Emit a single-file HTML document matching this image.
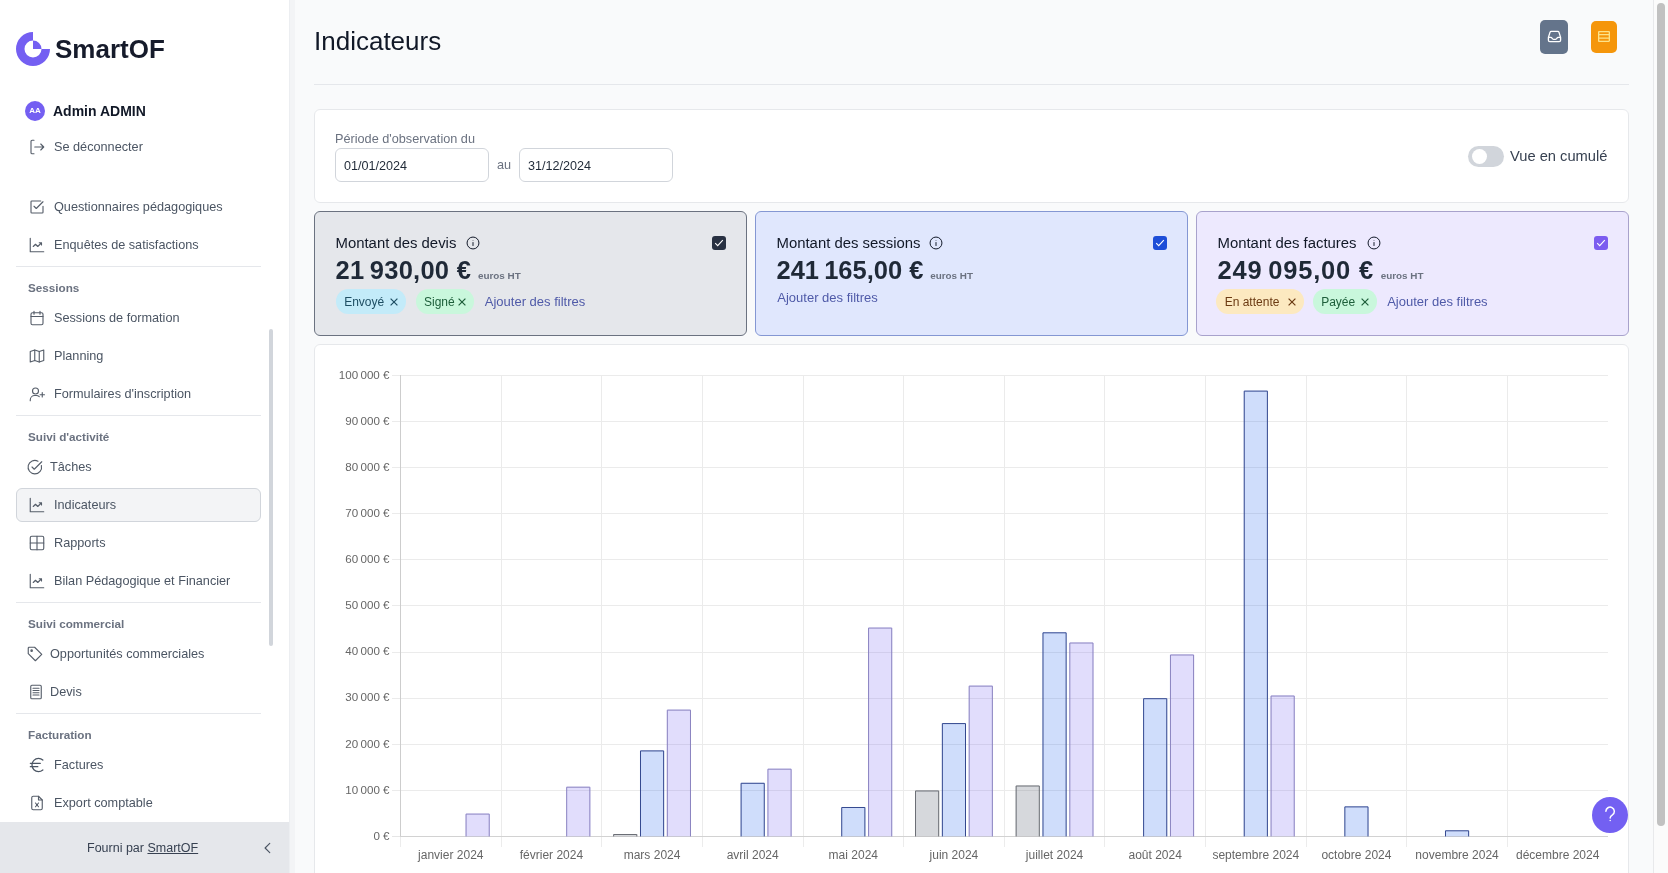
<!DOCTYPE html>
<html lang="fr">
<head>
<meta charset="utf-8">
<title>Indicateurs - SmartOF</title>
<style>
*{box-sizing:border-box;margin:0;padding:0}
html,body{width:1668px;height:873px;overflow:hidden}
body{position:relative;will-change:transform;background:#f9fafb;font-family:"Liberation Sans",sans-serif;color:#111827}
.abs{position:absolute;white-space:nowrap}
#sb{position:absolute;left:0;top:0;width:289px;height:873px;background:#fff}
.it{position:absolute;left:30px;height:20px;line-height:20px;font-size:12.7px;color:#4b5563;white-space:nowrap}
.it svg{position:absolute;left:-2px;top:1px;width:18px;height:18px}
.it span{position:absolute;left:24px;top:0}
.hd{position:absolute;left:28px;height:20px;line-height:20px;font-size:11.7px;font-weight:bold;color:#6b7280;white-space:nowrap}
.dv{position:absolute;left:16px;width:245px;height:1px;background:#e5e7eb}
.card{position:absolute;top:211px;width:433px;height:125px;border:1px solid;border-radius:6px}
.ct{position:absolute;left:20.5px;top:21px;height:20px;line-height:20px;font-size:14.9px;color:#111827;white-space:nowrap}
.cv{position:absolute;left:20.5px;top:43.4px;height:30px;line-height:30px;font-size:25.5px;font-weight:bold;color:#1f2937;white-space:nowrap}
.cv small{font-size:9.9px;letter-spacing:0;color:#6b7280;font-weight:bold;margin-left:6.8px}
.badge{position:absolute;top:77.4px;height:24.4px;line-height:27px;border-radius:12.2px;font-size:12px;padding:0 0 0 8.5px;white-space:nowrap}
.add{position:absolute;top:77.4px;height:24.4px;line-height:26px;font-size:13px;color:#4f5aa8;white-space:nowrap}
.cb{position:absolute;top:24px;left:397px;width:14px;height:14px;border-radius:3px}
</style>
</head>
<body>
<!-- SIDEBAR -->
<div id="sb">
  <svg class="abs" style="left:0;top:0" width="60" height="80" viewBox="0 0 60 80">
    <path fill="#745ff2" d="M50 49A17 17 0 1 1 33 32L33 40.5A8.5 8.5 0 1 0 41.5 49Z"/>
    <path fill="#745ff2" d="M33 49L33 40.5A8.5 8.5 0 0 1 41.5 49Z"/>
  </svg>
  <div class="abs" style="left:55px;top:34px;height:30px;line-height:30px;font-size:26px;font-weight:bold;color:#161b2b;">SmartOF</div>

  <div class="abs" style="left:25px;top:101px;width:20px;height:20px;border-radius:50%;background:#745ff2;color:#fff;font-size:8px;font-weight:bold;line-height:20px;text-align:center">AA</div>
  <div class="abs" style="left:53px;top:101px;height:20px;line-height:20px;font-size:14px;font-weight:bold;color:#111827">Admin ADMIN</div>

  <div class="it" style="top:137px"><svg viewBox="0 0 24 24" fill="none" stroke="#555d69" stroke-width="1.5" stroke-linecap="round" stroke-linejoin="round"><path d="M8 3H5.5A1.5 1.5 0 0 0 4 4.5v15A1.5 1.5 0 0 0 5.5 21H8"/><path d="M9 12h12M17 8l4 4-4 4"/></svg><span>Se déconnecter</span></div>

  <div class="it" style="top:197px"><svg viewBox="0 0 24 24" fill="none" stroke="#555d69" stroke-width="1.5" stroke-linecap="round" stroke-linejoin="round"><path d="M4 5a1 1 0 0 1 1-1h12M20 11v8a1 1 0 0 1-1 1H5a1 1 0 0 1-1-1V5"/><path d="M8 11l3 3 9-9"/></svg><span>Questionnaires pédagogiques</span></div>
  <div class="it" style="top:235px"><svg viewBox="0 0 24 24" fill="none" stroke="#555d69" stroke-width="1.5" stroke-linecap="round" stroke-linejoin="round"><path d="M3 3v18h18"/><path d="M7 14l3-3 3 3 5-5M15 9h3v3"/></svg><span>Enquêtes de satisfactions</span></div>
  <div class="dv" style="top:266px"></div>

  <div class="hd" style="top:277.5px">Sessions</div>
  <div class="it" style="top:307.5px"><svg viewBox="0 0 24 24" fill="none" stroke="#555d69" stroke-width="1.5" stroke-linecap="round" stroke-linejoin="round"><rect x="4" y="5" width="16" height="16" rx="2"/><path d="M4 10h16M8 3v4M16 3v4"/></svg><span>Sessions de formation</span></div>
  <div class="it" style="top:345.5px"><svg viewBox="0 0 24 24" fill="none" stroke="#555d69" stroke-width="1.5" stroke-linecap="round" stroke-linejoin="round"><path d="M3 6l6-2 6 2 6-2v14l-6 2-6-2-6 2z"/><path d="M9 4v14M15 6v14"/></svg><span>Planning</span></div>
  <div class="it" style="top:383.5px"><svg viewBox="0 0 24 24" fill="none" stroke="#555d69" stroke-width="1.5" stroke-linecap="round" stroke-linejoin="round"><circle cx="10" cy="8" r="4"/><path d="M3 21v-1a6 6 0 0 1 6-6h2a6 6 0 0 1 4 1.5"/><path d="M19 10v6M16 13h6"/></svg><span>Formulaires d'inscription</span></div>
  <div class="dv" style="top:415px"></div>

  <div class="hd" style="top:426.5px">Suivi d'activité</div>
  <div class="it" style="top:456.5px;left:28px"><svg viewBox="0 0 24 24" fill="none" stroke="#555d69" stroke-width="1.5" stroke-linecap="round" stroke-linejoin="round"><path d="M20.5 10A9 9 0 1 1 16 4.2"/><path d="M8 12l3 3 10-10"/></svg><span style="left:22px">Tâches</span></div>
  <div class="abs" style="left:16px;top:488px;width:245px;height:34px;background:#f3f4f6;border:1px solid #d1d5db;border-radius:6px"></div>
  <div class="it" style="top:494.5px"><svg viewBox="0 0 24 24" fill="none" stroke="#555d69" stroke-width="1.5" stroke-linecap="round" stroke-linejoin="round"><path d="M3 3v18h18"/><path d="M7 14l3-3 3 3 5-5M15 9h3v3"/></svg><span>Indicateurs</span></div>
  <div class="it" style="top:532.5px"><svg viewBox="0 0 24 24" fill="none" stroke="#555d69" stroke-width="1.5" stroke-linecap="round" stroke-linejoin="round"><rect x="3" y="3" width="18" height="18" rx="2"/><path d="M3 12h18M12 3v18"/></svg><span>Rapports</span></div>
  <div class="it" style="top:570.5px"><svg viewBox="0 0 24 24" fill="none" stroke="#555d69" stroke-width="1.5" stroke-linecap="round" stroke-linejoin="round"><path d="M3 3v18h18"/><path d="M7 14l3-3 3 3 5-5M15 9h3v3"/></svg><span>Bilan Pédagogique et Financier</span></div>
  <div class="dv" style="top:602px"></div>

  <div class="hd" style="top:613.5px">Suivi commercial</div>
  <div class="it" style="top:643.5px;left:28px"><svg viewBox="0 0 24 24" fill="none" stroke="#555d69" stroke-width="1.5" stroke-linecap="round" stroke-linejoin="round"><path d="M3 4v7.5l9.5 9.5 8.5-8.5L11.5 3H4z"/><circle cx="7.5" cy="7.5" r="1"/></svg><span style="left:22px">Opportunités commerciales</span></div>
  <div class="it" style="top:681.5px;left:29px"><svg viewBox="0 0 24 24" fill="none" stroke="#555d69" stroke-width="1.5" stroke-linecap="round" stroke-linejoin="round"><rect x="5" y="3" width="14" height="18" rx="1.5"/><path d="M8 7h8M8 10h8M8 13h8M8 16h8"/></svg><span style="left:21px">Devis</span></div>
  <div class="dv" style="top:713px"></div>

  <div class="hd" style="top:724.5px">Facturation</div>
  <div class="it" style="top:754.5px"><svg style="left:-2.8px;top:0;width:20px;height:20px" viewBox="0 0 24 24" fill="none" stroke="#4b5563" stroke-width="1.5" stroke-linecap="round" stroke-linejoin="round"><path d="M4 10h12M4 14h9M19 6a7.7 7.7 0 0 0-5.2-2A7.9 7.9 0 0 0 6 12c0 4.4 3.5 8 7.8 8 2 0 3.8-.8 5.2-2"/></svg><span>Factures</span></div>
  <div class="it" style="top:792.5px"><svg viewBox="0 0 24 24" fill="none" stroke="#555d69" stroke-width="1.5" stroke-linecap="round" stroke-linejoin="round"><path d="M14 3H7a2 2 0 0 0-2 2v14a2 2 0 0 0 2 2h10a2 2 0 0 0 2-2V8z"/><path d="M14 3v5h5M10 12l4 5M14 12l-4 5"/></svg><span>Export comptable</span></div>

  <div class="abs" style="left:269px;top:329px;width:4px;height:317px;background:#d1d5db;border-radius:2px"></div>

  <div class="abs" style="left:0;top:822px;width:289px;height:51px;background:#e5e7eb"></div>
  <div class="abs" style="left:87px;top:838px;height:20px;line-height:20px;font-size:12.5px;color:#374151">Fourni par <span style="text-decoration:underline">SmartOF</span></div>
  <svg class="abs" style="left:261px;top:841px" width="14" height="14" viewBox="0 0 24 24" fill="none" stroke="#4b5563" stroke-width="2" stroke-linecap="round" stroke-linejoin="round"><path d="M15 4l-8 8 8 8"/></svg>
</div>
<div class="abs" style="left:289px;top:0;width:6px;height:873px;background:#f3f4f6;border-left:1px solid #eceef1"></div>

<!-- MAIN -->
<div class="abs" style="left:314px;top:26px;height:30px;line-height:30px;font-size:26px;color:#111827">Indicateurs</div>
<div class="abs" style="left:1540px;top:20px;width:28px;height:34px;background:#64748b;border-radius:5px">
  <svg style="position:absolute;left:6.6px;top:9px" width="15" height="15" viewBox="0 0 24 24" fill="none" stroke="#fff" stroke-width="2.1" stroke-linecap="round" stroke-linejoin="round"><path d="M2.25 13.5h3.86a2.25 2.25 0 012.012 1.244l.256.512a2.25 2.25 0 002.013 1.244h3.218a2.25 2.25 0 002.013-1.244l.256-.512a2.25 2.25 0 012.013-1.244h3.859m-19.5.338V18a2.25 2.25 0 002.25 2.25h15A2.25 2.25 0 0021.75 18v-4.162c0-.224-.034-.447-.1-.661L19.24 5.338a2.25 2.25 0 00-2.15-1.588H6.911a2.25 2.25 0 00-2.15 1.588L2.35 13.177a2.25 2.25 0 00-.1.661z"/></svg>
</div>
<div class="abs" style="left:1591px;top:21px;width:26px;height:32px;background:#f5960b;border-radius:5px">
  <svg style="position:absolute;left:7.2px;top:10px" width="12" height="11" viewBox="0 0 12 11" fill="none" stroke="#fde38a" stroke-width="1.3"><rect x=".65" y=".65" width="10.7" height="9.7" rx=".5"/><path d="M.6 3.6h10.8M.6 7.2h10.8"/></svg>
</div>
<div class="abs" style="left:314px;top:84px;width:1315px;height:1px;background:#e5e7eb"></div>

<!-- filter card -->
<div class="abs" style="left:314px;top:109px;width:1315px;height:94px;background:#fff;border:1px solid #e6e8eb;border-radius:6px"></div>
<div class="abs" style="left:335px;top:129px;height:20px;line-height:20px;font-size:12.7px;color:#6b7280">Période d'observation du</div>
<div class="abs" style="left:335px;top:148px;width:154px;height:34px;background:#fff;border:1px solid #d1d5db;border-radius:6px"></div>
<div class="abs" style="left:344px;top:155.5px;height:20px;line-height:20px;font-size:12.6px;color:#1f2937">01/01/2024</div>
<div class="abs" style="left:497px;top:155px;height:20px;line-height:20px;font-size:12.7px;color:#6b7280">au</div>
<div class="abs" style="left:519px;top:148px;width:154px;height:34px;background:#fff;border:1px solid #d1d5db;border-radius:6px"></div>
<div class="abs" style="left:528px;top:155.5px;height:20px;line-height:20px;font-size:12.6px;color:#1f2937">31/12/2024</div>
<div class="abs" style="left:1468px;top:146px;width:36px;height:21px;background:#d1d5db;border-radius:11px"></div>
<div class="abs" style="left:1472px;top:148.8px;width:15.2px;height:15.2px;background:#fff;border-radius:50%"></div>
<div class="abs" style="left:1510px;top:146px;height:20px;line-height:20px;font-size:14.7px;color:#374151">Vue en cumulé</div>

<!-- cards -->
<div class="card" style="left:314px;background:#e5e7eb;border-color:#6b7280">
  <div class="ct">Montant des devis<svg style="position:absolute;left:130.5px;top:2.5px" width="14" height="14" viewBox="0 0 24 24" fill="none" stroke="#111827" stroke-width="1.7"><circle cx="12" cy="12" r="10.2"/><path d="M12 10.5v6.5M12 7v.8"/></svg></div>
  <div class="cv" style="letter-spacing:0.26px">21&#8239;930,00 €<small>euros HT</small></div>
  <div class="badge" style="left:20.7px;width:70px;background:#c3ebf9;color:#1e4e63">Envoyé<svg style="position:absolute;right:8px;top:9px" width="8" height="8" viewBox="0 0 8 8" fill="none" stroke="currentColor" stroke-width="1.2"><path d="M.6.6l6.8 6.8M7.4.6L.6 7.4"/></svg></div>
  <div class="badge" style="left:100.5px;width:58.7px;background:#c9f7dc;color:#1d5e3a">Signé<svg style="position:absolute;right:8px;top:9px" width="8" height="8" viewBox="0 0 8 8" fill="none" stroke="currentColor" stroke-width="1.2"><path d="M.6.6l6.8 6.8M7.4.6L.6 7.4"/></svg></div>
  <div class="add" style="left:169.8px">Ajouter des filtres</div>
  <div class="cb" style="background:#283142"><svg width="14" height="14" viewBox="0 0 14 14" fill="none" stroke="#fff" stroke-width="1.1"><path d="M3.2 7.2l2.5 2.4L10.8 4.2"/></svg></div>
</div>
<div class="card" style="left:755px;background:#e0e7fd;border-color:#8497d3">
  <div class="ct">Montant des sessions<svg style="position:absolute;left:152.4px;top:2.5px" width="14" height="14" viewBox="0 0 24 24" fill="none" stroke="#111827" stroke-width="1.7"><circle cx="12" cy="12" r="10.2"/><path d="M12 10.5v6.5M12 7v.8"/></svg></div>
  <div class="cv">241&#8239;165,00 €<small>euros HT</small></div>
  <div class="add" style="left:21.3px;top:73.2px">Ajouter des filtres</div>
  <div class="cb" style="background:#1d4ed8"><svg width="14" height="14" viewBox="0 0 14 14" fill="none" stroke="#fff" stroke-width="1.1"><path d="M3.2 7.2l2.5 2.4L10.8 4.2"/></svg></div>
</div>
<div class="card" style="left:1196px;background:#ede9fe;border-color:#a8a2cc">
  <div class="ct">Montant des factures<svg style="position:absolute;left:149.5px;top:2.5px" width="14" height="14" viewBox="0 0 24 24" fill="none" stroke="#111827" stroke-width="1.7"><circle cx="12" cy="12" r="10.2"/><path d="M12 10.5v6.5M12 7v.8"/></svg></div>
  <div class="cv" style="letter-spacing:0.79px">249&#8239;095,00 €<small>euros HT</small></div>
  <div class="badge" style="left:19.2px;width:88.3px;background:#fce9c0;color:#6b3a12">En attente<svg style="position:absolute;right:8px;top:9px" width="8" height="8" viewBox="0 0 8 8" fill="none" stroke="currentColor" stroke-width="1.2"><path d="M.6.6l6.8 6.8M7.4.6L.6 7.4"/></svg></div>
  <div class="badge" style="left:115.7px;width:64.3px;background:#c9f7dc;color:#1d5e3a">Payée<svg style="position:absolute;right:8px;top:9px" width="8" height="8" viewBox="0 0 8 8" fill="none" stroke="currentColor" stroke-width="1.2"><path d="M.6.6l6.8 6.8M7.4.6L.6 7.4"/></svg></div>
  <div class="add" style="left:190.2px">Ajouter des filtres</div>
  <div class="cb" style="background:#7c5cf0"><svg width="14" height="14" viewBox="0 0 14 14" fill="none" stroke="#fff" stroke-width="1.1"><path d="M3.2 7.2l2.5 2.4L10.8 4.2"/></svg></div>
</div>

<!-- chart card -->
<div class="abs" style="left:314px;top:344px;width:1315px;height:560px;background:#fff;border:1px solid #e6e8eb;border-radius:6px"></div>
<svg id="chart" class="abs" style="left:0;top:0" width="1668" height="873" font-family="Liberation Sans, sans-serif" font-size="12" fill="#666"><line x1="392" y1="836.5" x2="400" y2="836.5" stroke="#e6e6e6"/><line x1="400" y1="836.5" x2="1608.0" y2="836.5" stroke="#d2d2d2"/><line x1="392" y1="790.5" x2="1608.0" y2="790.5" stroke="#ebebeb"/><line x1="392" y1="744.5" x2="1608.0" y2="744.5" stroke="#ebebeb"/><line x1="392" y1="698.5" x2="1608.0" y2="698.5" stroke="#ebebeb"/><line x1="392" y1="652.5" x2="1608.0" y2="652.5" stroke="#ebebeb"/><line x1="392" y1="605.5" x2="1608.0" y2="605.5" stroke="#ebebeb"/><line x1="392" y1="559.5" x2="1608.0" y2="559.5" stroke="#ebebeb"/><line x1="392" y1="513.5" x2="1608.0" y2="513.5" stroke="#ebebeb"/><line x1="392" y1="467.5" x2="1608.0" y2="467.5" stroke="#ebebeb"/><line x1="392" y1="421.5" x2="1608.0" y2="421.5" stroke="#ebebeb"/><line x1="392" y1="375.5" x2="1608.0" y2="375.5" stroke="#ebebeb"/><line x1="400.5" y1="375" x2="400.5" y2="836" stroke="#cdcdcd"/><line x1="400.5" y1="837" x2="400.5" y2="847" stroke="#ececec"/><line x1="501.5" y1="375" x2="501.5" y2="836" stroke="#ebebeb"/><line x1="501.5" y1="837" x2="501.5" y2="847" stroke="#ececec"/><line x1="601.5" y1="375" x2="601.5" y2="836" stroke="#ebebeb"/><line x1="601.5" y1="837" x2="601.5" y2="847" stroke="#ececec"/><line x1="702.5" y1="375" x2="702.5" y2="836" stroke="#ebebeb"/><line x1="702.5" y1="837" x2="702.5" y2="847" stroke="#ececec"/><line x1="803.5" y1="375" x2="803.5" y2="836" stroke="#ebebeb"/><line x1="803.5" y1="837" x2="803.5" y2="847" stroke="#ececec"/><line x1="903.5" y1="375" x2="903.5" y2="836" stroke="#ebebeb"/><line x1="903.5" y1="837" x2="903.5" y2="847" stroke="#ececec"/><line x1="1004.5" y1="375" x2="1004.5" y2="836" stroke="#ebebeb"/><line x1="1004.5" y1="837" x2="1004.5" y2="847" stroke="#ececec"/><line x1="1104.5" y1="375" x2="1104.5" y2="836" stroke="#ebebeb"/><line x1="1104.5" y1="837" x2="1104.5" y2="847" stroke="#ececec"/><line x1="1205.5" y1="375" x2="1205.5" y2="836" stroke="#ebebeb"/><line x1="1205.5" y1="837" x2="1205.5" y2="847" stroke="#ececec"/><line x1="1306.5" y1="375" x2="1306.5" y2="836" stroke="#ebebeb"/><line x1="1306.5" y1="837" x2="1306.5" y2="847" stroke="#ececec"/><line x1="1406.5" y1="375" x2="1406.5" y2="836" stroke="#ebebeb"/><line x1="1406.5" y1="837" x2="1406.5" y2="847" stroke="#ececec"/><line x1="1507.5" y1="375" x2="1507.5" y2="836" stroke="#ebebeb"/><line x1="1507.5" y1="837" x2="1507.5" y2="847" stroke="#ececec"/><text x="389.5" y="839.70" text-anchor="end" font-size="11.6">0 €</text><text x="389.5" y="793.60" text-anchor="end" font-size="11.6">10 000 €</text><text x="389.5" y="747.50" text-anchor="end" font-size="11.6">20 000 €</text><text x="389.5" y="701.40" text-anchor="end" font-size="11.6">30 000 €</text><text x="389.5" y="655.30" text-anchor="end" font-size="11.6">40 000 €</text><text x="389.5" y="609.20" text-anchor="end" font-size="11.6">50 000 €</text><text x="389.5" y="563.10" text-anchor="end" font-size="11.6">60 000 €</text><text x="389.5" y="517.00" text-anchor="end" font-size="11.6">70 000 €</text><text x="389.5" y="470.90" text-anchor="end" font-size="11.6">80 000 €</text><text x="389.5" y="424.80" text-anchor="end" font-size="11.6">90 000 €</text><text x="389.5" y="378.70" text-anchor="end" font-size="11.6">100 000 €</text><text x="450.81" y="859" text-anchor="middle">janvier 2024</text><text x="551.44" y="859" text-anchor="middle">février 2024</text><text x="652.06" y="859" text-anchor="middle">mars 2024</text><text x="752.69" y="859" text-anchor="middle">avril 2024</text><text x="853.31" y="859" text-anchor="middle">mai 2024</text><text x="953.94" y="859" text-anchor="middle">juin 2024</text><text x="1054.56" y="859" text-anchor="middle">juillet 2024</text><text x="1155.19" y="859" text-anchor="middle">août 2024</text><text x="1255.81" y="859" text-anchor="middle">septembre 2024</text><text x="1356.44" y="859" text-anchor="middle">octobre 2024</text><text x="1457.06" y="859" text-anchor="middle">novembre 2024</text><text x="1557.69" y="859" text-anchor="middle">décembre 2024</text><rect x="613.15" y="834.00" width="24.15" height="2.40" fill="rgba(107,114,128,0.28)"/><path d="M613.65 836.40V834.50H636.80V836.40" fill="none" stroke="#6b6e75" stroke-width="1"/><rect x="915.03" y="790.48" width="24.15" height="45.92" fill="rgba(107,114,128,0.28)"/><path d="M915.53 836.40V790.98H938.68V836.40" fill="none" stroke="#6b6e75" stroke-width="1"/><rect x="1015.65" y="785.51" width="24.15" height="50.89" fill="rgba(107,114,128,0.28)"/><path d="M1016.15 836.40V786.01H1039.30V836.40" fill="none" stroke="#6b6e75" stroke-width="1"/><rect x="639.99" y="750.42" width="24.15" height="85.98" fill="rgba(37,99,235,0.22)"/><path d="M640.49 836.40V750.92H663.64V836.40" fill="none" stroke="#34488f" stroke-width="1"/><rect x="740.61" y="782.79" width="24.15" height="53.61" fill="rgba(37,99,235,0.22)"/><path d="M741.11 836.40V783.29H764.26V836.40" fill="none" stroke="#34488f" stroke-width="1"/><rect x="841.24" y="806.99" width="24.15" height="29.41" fill="rgba(37,99,235,0.22)"/><path d="M841.74 836.40V807.49H864.89V836.40" fill="none" stroke="#34488f" stroke-width="1"/><rect x="941.86" y="723.09" width="24.15" height="113.31" fill="rgba(37,99,235,0.22)"/><path d="M942.36 836.40V723.59H965.51V836.40" fill="none" stroke="#34488f" stroke-width="1"/><rect x="1042.49" y="632.32" width="24.15" height="204.08" fill="rgba(37,99,235,0.22)"/><path d="M1042.99 836.40V632.82H1066.14V836.40" fill="none" stroke="#34488f" stroke-width="1"/><rect x="1143.11" y="698.19" width="24.15" height="138.21" fill="rgba(37,99,235,0.22)"/><path d="M1143.61 836.40V698.69H1166.76V836.40" fill="none" stroke="#34488f" stroke-width="1"/><rect x="1243.74" y="390.61" width="24.15" height="445.79" fill="rgba(37,99,235,0.22)"/><path d="M1244.24 836.40V391.11H1267.39V836.40" fill="none" stroke="#34488f" stroke-width="1"/><rect x="1344.36" y="806.39" width="24.15" height="30.01" fill="rgba(37,99,235,0.22)"/><path d="M1344.86 836.40V806.89H1368.01V836.40" fill="none" stroke="#34488f" stroke-width="1"/><rect x="1444.99" y="830.31" width="24.15" height="6.09" fill="rgba(37,99,235,0.22)"/><path d="M1445.49 836.40V830.81H1468.64V836.40" fill="none" stroke="#34488f" stroke-width="1"/><rect x="465.57" y="813.58" width="24.15" height="22.82" fill="rgba(115,96,242,0.21)"/><path d="M466.07 836.40V814.08H489.22V836.40" fill="none" stroke="#8a83c0" stroke-width="1"/><rect x="566.20" y="786.70" width="24.15" height="49.70" fill="rgba(115,96,242,0.21)"/><path d="M566.70 836.40V787.20H589.85V836.40" fill="none" stroke="#8a83c0" stroke-width="1"/><rect x="666.82" y="709.62" width="24.15" height="126.78" fill="rgba(115,96,242,0.21)"/><path d="M667.32 836.40V710.12H690.47V836.40" fill="none" stroke="#8a83c0" stroke-width="1"/><rect x="767.45" y="768.68" width="24.15" height="67.72" fill="rgba(115,96,242,0.21)"/><path d="M767.95 836.40V769.18H791.10V836.40" fill="none" stroke="#8a83c0" stroke-width="1"/><rect x="868.07" y="627.57" width="24.15" height="208.83" fill="rgba(115,96,242,0.21)"/><path d="M868.57 836.40V628.07H891.72V836.40" fill="none" stroke="#8a83c0" stroke-width="1"/><rect x="968.70" y="685.61" width="24.15" height="150.79" fill="rgba(115,96,242,0.21)"/><path d="M969.20 836.40V686.11H992.35V836.40" fill="none" stroke="#8a83c0" stroke-width="1"/><rect x="1069.32" y="642.50" width="24.15" height="193.90" fill="rgba(115,96,242,0.21)"/><path d="M1069.82 836.40V643.00H1092.97V836.40" fill="none" stroke="#8a83c0" stroke-width="1"/><rect x="1169.95" y="654.49" width="24.15" height="181.91" fill="rgba(115,96,242,0.21)"/><path d="M1170.45 836.40V654.99H1193.60V836.40" fill="none" stroke="#8a83c0" stroke-width="1"/><rect x="1270.57" y="695.52" width="24.15" height="140.88" fill="rgba(115,96,242,0.21)"/><path d="M1271.07 836.40V696.02H1294.22V836.40" fill="none" stroke="#8a83c0" stroke-width="1"/></svg>

<!-- help -->
<div class="abs" style="left:1592px;top:797px;width:36px;height:36px;border-radius:50%;background:#7360f2"></div>
<svg class="abs" style="left:1592px;top:797px" width="36" height="36" viewBox="0 0 36 36" fill="none" stroke="#fff" stroke-width="1.5" stroke-linecap="round"><path d="M13.9 14.3A4.2 4.2 0 1 1 20.6 17.7C19 18.8 18.2 19.3 18.2 20.7V21"/><circle cx="18.2" cy="23.6" r=".75" fill="#fff" stroke="none"/></svg>

<!-- page scrollbar -->
<div class="abs" style="left:1653px;top:0;width:15px;height:873px;background:#fbfbfb;border-left:1px solid #e8e9eb"></div>
<div class="abs" style="left:1657px;top:3px;width:8px;height:823px;background:#c1c1c1;border-radius:4px"></div>
</body>
</html>
